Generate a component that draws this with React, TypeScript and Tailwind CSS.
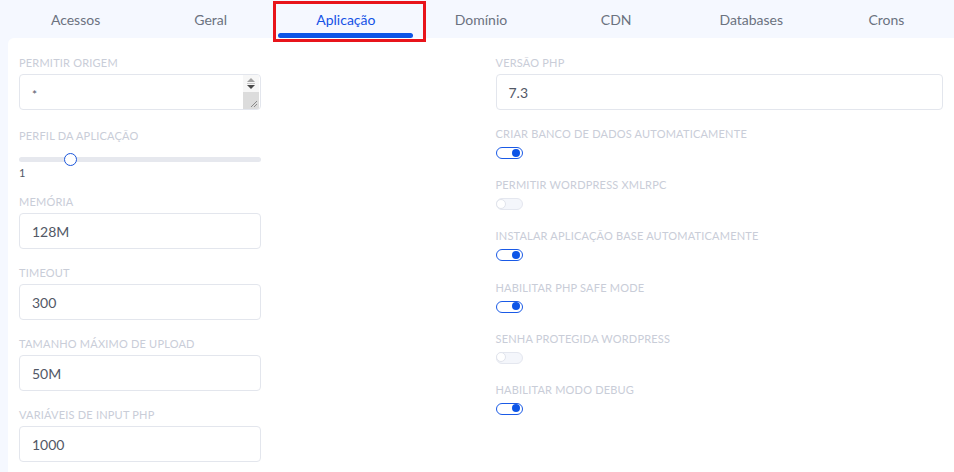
import type { ReactNode } from 'react'

const tabs = ['Acessos', 'Geral', 'Aplicação', 'Domínio', 'CDN', 'Databases', 'Crons']

function Label({ children }: { children: ReactNode }) {
  return (
    <div className="text-[11px] leading-[14px] uppercase text-[#c9cdd8] tracking-[0.2px] whitespace-nowrap">
      {children}
    </div>
  )
}

function TextField({ label, value }: { label: string; value: string }) {
  return (
    <div className="mb-[17px] flex flex-col">
      <Label>{label}</Label>
      <div className="mt-[4px] flex h-[36px] w-[242px] items-center rounded-[4px] border-[1.5px] border-[#e3e6ed] bg-white px-[12px] text-[14px] text-[#525866]">
        {value}
      </div>
    </div>
  )
}

function Toggle({ on }: { on: boolean }) {
  return on ? (
    <span className="relative block h-[12px] w-[27px] rounded-full border-[1.5px] border-[#1a5ae6] bg-white">
      <span className="absolute right-[1.5px] top-[0.5px] h-[8px] w-[8px] rounded-full bg-[#0d55e7]" />
    </span>
  ) : (
    <span className="relative block h-[12px] w-[27px] rounded-full border-[1.5px] border-[#e4e7ef] bg-[#f4f6fb]">
      <span className="absolute left-[-0.5px] top-[-0.5px] h-[10px] w-[10px] rounded-full border border-[#e1e4ec] bg-white" />
    </span>
  )
}

function ToggleField({ label, on }: { label: string; on: boolean }) {
  return (
    <div className="mb-[19.2px] flex flex-col">
      <Label>{label}</Label>
      <div className="mt-[6px]">
        <Toggle on={on} />
      </div>
    </div>
  )
}

export default function App() {
  return (
    <div className="relative h-[472px] w-[954px] overflow-hidden bg-[#f5f8ff] font-['Lato',sans-serif]">
      {/* tabs */}
      <nav className="grid h-[38px] grid-cols-7 pl-[8px]">
        {tabs.map((t) => {
          const active = t === 'Aplicação'
          return (
            <div
              key={t}
              className={`relative flex items-center justify-center pt-[2px] text-[14px] leading-[20px] ${
                active ? 'text-[#1452e6]' : 'text-[#6b7280]'
              }`}
            >
              {t}
              {active && (
                <span className="absolute bottom-0 left-0 right-0 h-[5px] rounded-[3px] bg-[#0d55e7]" />
              )}
            </div>
          )
        })}
      </nav>

      {/* highlight box */}
      <div className="pointer-events-none absolute left-[273px] top-[1px] h-[41px] w-[153px] border-[3px] border-[#e8141b]" />

      {/* card */}
      <div className="ml-[8px] h-[434px] rounded-tl-[6px] bg-white px-[11px] pt-[18px]">
        <div className="grid grid-cols-2 gap-x-[29px]">
          {/* left column */}
          <div className="flex flex-col">
            <div className="mb-[19px] flex flex-col">
              <Label>Permitir origem</Label>
              <div className="relative mt-[4px] flex h-[36px] w-[242px] items-center overflow-hidden rounded-[4px] border-[1.5px] border-[#e3e6ed] bg-white px-[12px] text-[14px] text-[#525866]">
                <span className="mt-[5px] text-[12px]">*</span>
                <div className="absolute bottom-0 right-[1px] top-0 flex w-[16px] flex-col">
                  <div className="flex h-[17px] flex-col items-center justify-center gap-[1px] bg-[#f7f7f7]">
                    <span className="h-0 w-0 border-x-[4px] border-b-[4px] border-x-transparent border-b-[#a3a3a3]" />
                    <span className="h-[1px] w-[8px] bg-[#c8c8c8]" />
                    <span className="h-0 w-0 border-x-[4px] border-t-[4px] border-x-transparent border-t-[#4a4a4a]" />
                  </div>
                  <div className="relative flex-1 bg-[#dcdcdc]">
                    <svg className="absolute bottom-[1px] right-[1px]" width="9" height="9" viewBox="0 0 9 9">
                      <path d="M8 2 L2 8 M8 5 L5 8" stroke="#8a8a8a" strokeWidth="1" />
                    </svg>
                  </div>
                </div>
              </div>
            </div>

            <div className="mb-[15px] flex flex-col">
              <Label>Perfil da aplicação</Label>
              <div className="relative mt-[10px] flex h-[13px] w-[242px] items-center">
                <div className="h-[5px] w-full rounded-full bg-[#e6e8ee]" />
                <span className="absolute left-[45px] top-0 h-[13px] w-[13px] rounded-full border-[1.5px] border-[#1a56db] bg-white" />
              </div>
              <div className="text-[11px] leading-[14px] text-[#525866]">1</div>
            </div>

            <TextField label="Memória" value="128M" />
            <TextField label="Timeout" value="300" />
            <TextField label="Tamanho máximo de upload" value="50M" />
            <TextField label="Variáveis de input PHP" value="1000" />
          </div>

          {/* right column */}
          <div className="flex flex-col">
            <div className="mb-[17px] flex flex-col">
              <Label>Versão PHP</Label>
              <div className="mt-[4px] flex h-[36px] w-full items-center rounded-[4px] border-[1.5px] border-[#e3e6ed] bg-white px-[12px] text-[14px] text-[#525866]">
                7.3
              </div>
            </div>
            <ToggleField label="Criar banco de dados automaticamente" on />
            <ToggleField label="Permitir WordPress XMLRPC" on={false} />
            <ToggleField label="Instalar aplicação base automaticamente" on />
            <ToggleField label="Habilitar PHP safe mode" on />
            <ToggleField label="Senha protegida WordPress" on={false} />
            <ToggleField label="Habilitar modo debug" on />
          </div>
        </div>
      </div>
    </div>
  )
}
